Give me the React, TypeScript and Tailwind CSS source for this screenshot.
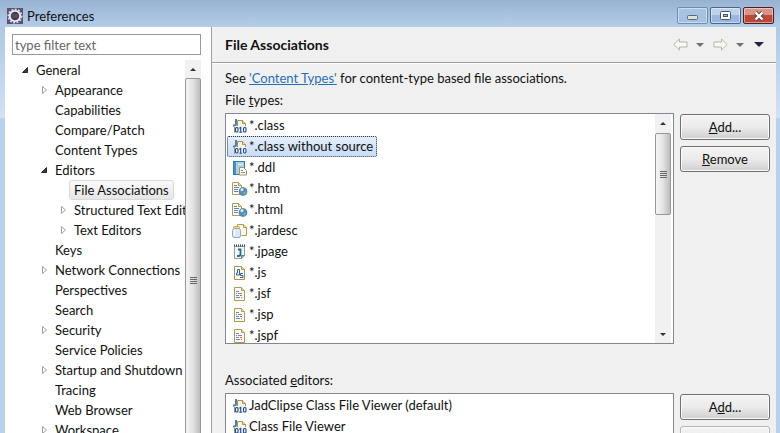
import { useState, type ReactNode } from "react";

type TreeRow = { label: string; depth: 0 | 1 | 2; state?: "open" | "closed"; selected?: boolean };

const tree: TreeRow[] = [
  { label: "General", depth: 0, state: "open" },
  { label: "Appearance", depth: 1, state: "closed" },
  { label: "Capabilities", depth: 1 },
  { label: "Compare/Patch", depth: 1 },
  { label: "Content Types", depth: 1 },
  { label: "Editors", depth: 1, state: "open" },
  { label: "File Associations", depth: 2, selected: true },
  { label: "Structured Text Editors", depth: 2, state: "closed" },
  { label: "Text Editors", depth: 2, state: "closed" },
  { label: "Keys", depth: 1 },
  { label: "Network Connections", depth: 1, state: "closed" },
  { label: "Perspectives", depth: 1 },
  { label: "Search", depth: 1 },
  { label: "Security", depth: 1, state: "closed" },
  { label: "Service Policies", depth: 1 },
  { label: "Startup and Shutdown", depth: 1, state: "closed" },
  { label: "Tracing", depth: 1 },
  { label: "Web Browser", depth: 1 },
  { label: "Workspace", depth: 1, state: "closed" },
];

const indents = { 0: "pl-[5px]", 1: "pl-6", 2: "pl-[43px]" };

function ClassIcon() {
  return (
    <svg width="16" height="16" viewBox="0 0 16 16" className="shrink-0" aria-hidden="true">
      <path d="M5.500 9V2.500h5l3 3V9" fill="#fbf6e0" stroke="#a8925a" />
      <path d="M10.500 2.500v3h3" fill="#ecdca6" stroke="#a8925a" />
      <path d="M2.500 9v5.500h1" fill="none" stroke="#a8925a" />
      <path d="M4 1v4.700q0 1.800-1.600 1.800H1" fill="none" stroke="#4d7fb0" strokeWidth="2" />
      <rect x="3" y="8" width="12" height="7" fill="#eef4fa" />
      <g fill="none" stroke="#234a86" strokeWidth="1.100">
        <rect x="3.500" y="9.500" width="2.500" height="4.500" rx="1" />
        <path d="M7.300 10.200 8.700 9.500v4.900M7.300 14.200h2.800" />
        <rect x="11.500" y="9.500" width="2.500" height="4.500" rx="1" />
      </g>
    </svg>
  );
}

function DdlIcon() {
  return (
    <svg width="16" height="16" viewBox="0 0 16 16" className="shrink-0" aria-hidden="true">
      <rect x="1.500" y="1.500" width="11" height="13" fill="#a9d2e8" stroke="#3a7ba8" />
      <path d="M2 2h2v12H2z" fill="#4f8fba" />
      <path d="M6 4.500h5" stroke="#e5f4fb" />
      <path d="M7.500 7.500h4l3 3v4.500h-7z" fill="#fdfbf1" stroke="#a8925a" />
      <path d="M9 10.500h2M9 12.500h4" stroke="#6d8fc0" />
    </svg>
  );
}

function HtmlIcon() {
  return (
    <svg width="16" height="16" viewBox="0 0 16 16" className="shrink-0" aria-hidden="true">
      <path d="M.5 13.500V1.500h6l3 3v9z" fill="#fdfbf1" stroke="#b09856" />
      <path d="M6.500 1.500v3h3" fill="#efdfaa" stroke="#b09856" />
      <path d="M2 4.500h3M2 6.500h5M2 8.500h4M2 10.500h4" stroke="#5f80bb" />
      <circle cx="11" cy="10.500" r="4" fill="#568fbd" stroke="#5d7f92" strokeWidth=".8" />
      <path d="M8 9q2-2.500 4-1.500l-1 2-2 1zM11 11.500l3-1q0 2-2 3z" fill="#80b78b" />
      <circle cx="10" cy="8.700" r="1.400" fill="#d8eef7" />
    </svg>
  );
}

function JarIcon() {
  return (
    <svg width="16" height="16" viewBox="0 0 16 16" className="shrink-0" aria-hidden="true">
      <path d="M5.500 11.500v-10h6l3 3v8h-5" fill="#fdf9e7" stroke="#b09856" />
      <path d="M11.500 1.500v3h3" fill="#efdfaa" stroke="#b09856" />
      <path d="M.5 7.500q0-1.500 1.500-2h5q1.500.5 1.500 2v5q0 2-1.500 2H2q-1.500 0-1.500-2z" fill="#dce8f5" stroke="#92a9c6" />
      <rect x="1.500" y="3.500" width="6" height="2" rx="1" fill="#f3e2a2" stroke="#c0a050" />
      <path d="M2.500 7.500v5" stroke="#fff" />
    </svg>
  );
}

function PageIcon() {
  return (
    <svg width="16" height="16" viewBox="0 0 16 16" className="shrink-0" aria-hidden="true">
      <path d="M2.500 2.500h10v9l-3 3h-7z" fill="#f2f8fb" stroke="#8fa489" />
      <path d="M9.500 14.500v-3h3" fill="#79b689" stroke="#4d946b" />
      <path d="M2 1.500h11" stroke="#284a64" strokeWidth="2" strokeDasharray="1 1" />
      <path d="M6 5.500h2.500V10q0 2-2 2H5" fill="none" stroke="#2d6699" strokeWidth="1.800" />
    </svg>
  );
}

function JsIcon() {
  return (
    <svg width="16" height="16" viewBox="0 0 16 16" className="shrink-0" aria-hidden="true">
      <path d="M2.500 14.500v-13h7l3 3v10z" fill="#fbfaf0" stroke="#a8925a" />
      <path d="M9.500 1.500v3h3" fill="#efdfaa" stroke="#a8925a" />
      <path d="M5.500 4.500h2v5.500H4.500V8h1zM11 8.500H8.500v2H11v2H8" fill="none" stroke="#2e61a0" />
    </svg>
  );
}

function JspIcon() {
  return (
    <svg width="16" height="16" viewBox="0 0 16 16" className="shrink-0" aria-hidden="true">
      <path d="M2.500 14.500v-13h7l3 3v10z" fill="#fcfaf0" stroke="#b09856" />
      <path d="M9.500 1.500v3h3" fill="#efdfaa" stroke="#b09856" />
      <path d="M4 5.500h3M6 7.500h4M4 11.500h4M4 9.500h3" stroke="#6787c2" />
      <path d="M4 7.500h1M8 9.500h2M9 11.500h1" stroke="#b36478" />
    </svg>
  );
}

const fileTypes: { name: string; icon: ReactNode }[] = [
  { name: "*.class", icon: <ClassIcon /> },
  { name: "*.class without source", icon: <ClassIcon /> },
  { name: "*.ddl", icon: <DdlIcon /> },
  { name: "*.htm", icon: <HtmlIcon /> },
  { name: "*.html", icon: <HtmlIcon /> },
  { name: "*.jardesc", icon: <JarIcon /> },
  { name: "*.jpage", icon: <PageIcon /> },
  { name: "*.js", icon: <JsIcon /> },
  { name: "*.jsf", icon: <JspIcon /> },
  { name: "*.jsp", icon: <JspIcon /> },
  { name: "*.jspf", icon: <JspIcon /> },
];

const editors = ["JadClipse Class File Viewer (default)", "Class File Viewer"];

function Twisty({ state }: { state?: "open" | "closed" }) {
  return (
    <svg width="12" height="12" viewBox="0 0 12 12" className="shrink-0" aria-hidden="true">
      {state === "open" && <path d="M10.500 3.500v5h-5z" fill="#404040" stroke="#262626" />}
      {state === "closed" && <path d="M6.500 2.500v7l4-3.500z" fill="#fff" stroke="#a0a0a0" />}
    </svg>
  );
}

function Caret({ className }: { className?: string }) {
  return (
    <svg viewBox="0 0 8 4" className={className} fill="currentColor" aria-hidden="true">
      <path d="M0 0h8L4 4z" />
    </svg>
  );
}

function Thumb({ className }: { className: string }) {
  return (
    <div
      className={`flex flex-col items-center justify-center gap-px rounded-xs border border-[#979797] bg-linear-to-r from-[#f5f5f5] via-[#e3e3e5] to-[#bdbdc1] ${className}`}
    >
      {[0, 1, 2, 3].map((n) => (
        <span key={n} className="h-px w-[7px] bg-[#66666a]" />
      ))}
    </div>
  );
}

function PushButton({ children, label, faded }: { children?: ReactNode; label: string; faded?: boolean }) {
  return (
    <button
      type="button"
      aria-label={label}
      className={`h-[26px] w-full shrink-0 rounded-[3px] border bg-linear-to-b from-[#f4f4f4] from-0% via-[#ebebeb] via-50% to-[#cfcfcf] leading-5 inset-shadow-[0_0_0_1px_#fafafa] ${
        faded ? "border-[#b4b4b4]" : "border-[#707070]"
      }`}
    >
      {children}
    </button>
  );
}

function NavArrow({ right }: { right?: boolean }) {
  return (
    <svg width="15" height="13" viewBox="0 0 15 13" className={right ? "rotate-180" : ""} aria-hidden="true">
      <path d="M.8 6.500 6.500 1v3h7.500v5H6.500v3z" fill="#fafaf4" stroke="#b5b5a8" />
    </svg>
  );
}

function TitleBar() {
  const base = "flex h-[17px] w-[31px] items-center justify-center rounded-[2px] border inset-shadow-[0_0_0_1px_#ffffff70]";
  return (
    <header className="flex h-[27px] shrink-0 items-center gap-1 bg-linear-to-b from-[#98b3d2] to-[#b3cde9] pr-[6px] pl-[7px]">
      <svg width="16" height="16" viewBox="0 0 16 16" className="mt-1 shrink-0" aria-hidden="true">
        <rect width="16" height="16" fill="#5a5272" />
        <circle cx="8" cy="8" r="6.600" fill="none" stroke="#d8d5df" strokeWidth="1.800" strokeDasharray="2 1.400" />
        <circle cx="8" cy="8" r="5.200" fill="#403a50" stroke="#f0eef3" strokeWidth="1.800" />
        <path d="M4.500 7h7M4.500 9h7" stroke="#625b78" />
      </svg>
      <h1 className="mt-1 grow leading-5">Preferences</h1>
      <div className="mt-1 flex gap-[2px]">
        <button type="button" aria-label="Minimize" className={`${base} border-[#6f8db2] bg-linear-to-b from-[#aac4e2] to-[#a3c1e2]`}>
          <svg width="11" height="5" viewBox="0 0 11 5" className="mt-1"><rect x=".5" y=".5" width="10" height="4" rx="1" fill="#e0e0dc" stroke="#5b6675" /></svg>
        </button>
        <button type="button" aria-label="Maximize" className={`${base} border-[#4b6587] bg-linear-to-b from-[#bdd3ec] from-50% to-[#98b9dd] to-50%`}>
          <svg width="11" height="9" viewBox="0 0 11 9"><rect x=".5" y=".5" width="10" height="8" rx="1" fill="#fff" stroke="#4a5568" /><rect x="3.500" y="3.500" width="4" height="2" fill="#9ab8d9" stroke="#4a5568" /></svg>
        </button>
        <button type="button" aria-label="Close" className={`${base} border-[#4f1d22] bg-linear-to-b from-[#d9948a] from-50% to-[#bd4838] to-50%`}>
          <svg width="12" height="10" viewBox="0 0 12 10"><path d="m2.500 1.500 7 7m0-7-7 7" stroke="#533c46" strokeWidth="4" /><path d="m2.500 1.500 7 7m0-7-7 7" stroke="#fff" strokeWidth="2.400" /></svg>
        </button>
      </div>
    </header>
  );
}

function Sidebar() {
  const [filter, setFilter] = useState("");
  return (
    <aside className="flex w-[206px] shrink-0 flex-col overflow-hidden bg-white pt-[7px] pr-[10px] pl-[7px]">
      <input
        type="text"
        aria-label="Filter"
        placeholder="type filter text"
        value={filter}
        onChange={(e) => setFilter(e.target.value)}
        className="h-[21px] w-full shrink-0 border border-[#9a9a9a] px-[2px] leading-4 outline-none placeholder:text-[#666666]"
      />
      <div className="mt-[5px] flex min-h-0 grow">
        <ul className="min-w-0 grow overflow-hidden">
          {tree.map((row) => (
            <li key={row.label} className={`flex h-5 items-center whitespace-nowrap ${indents[row.depth]}`}>
              <Twisty state={row.state} />
              <span
                className={
                  row.selected
                    ? "ml-[2px] rounded-[3px] border border-[#d9d9d9] bg-linear-to-b from-[#fafafa] to-[#e6e6e6] px-1 leading-[18px]"
                    : "ml-[7px] leading-5"
                }
              >
                {row.label}
              </span>
            </li>
          ))}
        </ul>
        <div className="flex w-4 shrink-0 flex-col bg-[#f1f1f1]">
          <div className="flex h-[18px] shrink-0 items-center justify-center">
            <Caret className="h-[3px] w-[6px] rotate-180 text-[#303030]" />
          </div>
          <Thumb className="h-[404px] shrink-0" />
        </div>
      </div>
    </aside>
  );
}

export default function App() {
  const [selected, setSelected] = useState("*.class without source");
  return (
    <div className="flex h-screen flex-col overflow-hidden bg-[#b9d1ea] font-['Lato','Open_Sans',sans-serif] text-[13px] text-[#101010]">
      <TitleBar />
      <div className="flex min-h-0 grow bg-linear-to-b from-[#aec8e5] from-0% via-[#d3e2f5] via-[90px] to-[#b9d1ea] to-[92px] pr-1 pl-[5px]">
        <Sidebar />
        <main className="flex min-w-0 grow flex-col border-l border-[#a0a0a0] bg-[#f0f0f0]">
          <div className="flex h-9 shrink-0 items-center border-b border-[#a0a0a0] pr-3 pl-[13px]">
            <h2 className="grow text-sm font-bold">File Associations</h2>
            <div className="flex items-center">
              <button type="button" aria-label="Back"><NavArrow /></button>
              <button type="button" aria-label="Back history" className="ml-2"><Caret className="h-1 w-2 text-[#707070]" /></button>
              <button type="button" aria-label="Forward" className="ml-[9px]"><NavArrow right /></button>
              <button type="button" aria-label="Forward history" className="ml-2"><Caret className="h-1 w-2 text-[#707070]" /></button>
              <button type="button" aria-label="Menu" className="ml-[10px]"><Caret className="h-[5px] w-[10px] text-[#1f2547]" /></button>
            </div>
          </div>
          <div className="flex min-h-0 grow flex-col border-t border-white pr-[6px] pl-[13px]">
            <p className="mt-1 leading-5">
              See <a href="#content-types" className="text-[#1f6fb8] underline">'Content Types'</a> for content-type based file associations.
            </p>
            <p className="mt-[2px] leading-5">File <u>t</u>ypes:</p>
            <div className="mt-[3px] flex gap-[6px]">
              <div className="flex h-[231px] min-w-0 grow border border-[#828790] bg-white">
                <ul className="grow overflow-hidden pt-px pl-px">
                  {fileTypes.map((type) => (
                    <li key={type.name} className="h-[21px]">
                      <button
                        type="button"
                        onClick={() => setSelected(type.name)}
                        className={`flex h-[21px] items-center gap-px rounded-xs border border-dotted pr-[3px] pl-1 leading-[19px] ${
                          selected === type.name
                            ? "border-[#24364f] bg-linear-to-b from-[#e6effa] to-[#c6dcf6]"
                            : "border-transparent"
                        }`}
                      >
                        {type.icon}
                        {type.name}
                      </button>
                    </li>
                  ))}
                </ul>
                <div className="mr-[2px] flex w-4 shrink-0 flex-col bg-[#f1f1f1]">
                  <div className="flex h-[19px] items-center justify-center"><Caret className="h-[3px] w-[6px] rotate-180 text-[#303030]" /></div>
                  <Thumb className="h-[82px]" />
                  <div className="mt-auto flex h-[18px] items-center justify-center"><Caret className="h-[3px] w-[6px] text-[#303030]" /></div>
                </div>
              </div>
              <div className="flex w-[90px] shrink-0 flex-col gap-[6px] pt-px">
                <PushButton label="Add file type"><u>A</u>dd...</PushButton>
                <PushButton label="Remove file type"><u>R</u>emove</PushButton>
              </div>
            </div>
            <p className="mt-[26px] leading-5">Associated <u>e</u>ditors:</p>
            <div className="mt-[3px] flex min-h-0 grow gap-[6px]">
              <ul className="min-w-0 grow overflow-hidden border border-b-0 border-[#828790] bg-white pt-px pl-[6px]">
                {editors.map((name) => (
                  <li key={name} className="flex h-[21px] items-center gap-px">
                    <ClassIcon />
                    {name}
                  </li>
                ))}
              </ul>
              <div className="flex w-[90px] shrink-0 flex-col gap-[6px] overflow-hidden pt-px">
                <PushButton label="Add editor">A<u>d</u>d...</PushButton>
                <PushButton label="Remove editor" faded />
              </div>
            </div>
          </div>
        </main>
      </div>
    </div>
  );
}
